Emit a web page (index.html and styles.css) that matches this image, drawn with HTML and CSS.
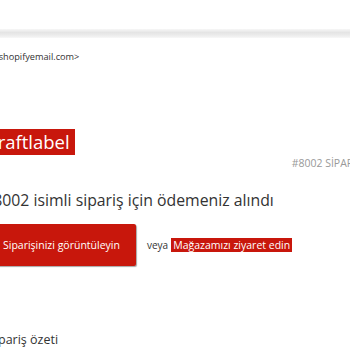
FILE: index.html
```html
<!DOCTYPE html>
<html lang="tr">
<head>
    <meta charset="UTF-8">
    <title>Sipariş onayı</title>
    <link rel="stylesheet" href="styles.css">
</head>
<body>
    <div class="toolbar"></div>
    <div class="divider"></div>

    <div class="sender">&lt;mailer@shopifyemail.com&gt;</div>

    <div class="mail">
        <div class="header">
            <div class="shop-name">Craftlabel</div>
            <div class="order-number">#8002 SİPARİŞ</div>
        </div>

        <h2 class="title">#8002 isimli sipariş için ödemeniz alındı</h2>

        <div class="actions">
            <a class="button" href="#">Siparişinizi görüntüleyin</a>
            <span class="or">veya</span>
            <a class="link" href="#">Mağazamızı ziyaret edin</a>
        </div>

        <h3 class="summary">Sipariş özeti</h3>
    </div>
</body>
</html>
```

FILE: styles.css
```css
body {
    margin: 0;
    font-family: "Open Sans", "Noto Sans", sans-serif;
    color: #333;
    background: #fff;
    overflow: hidden;
}

.toolbar {
    height: 29px;
    background: #fff;
}

.divider {
    height: 9px;
    background: linear-gradient(#f7f7f7, #e4e4e4 40%, #efefef 80%, #f8f8f8);
}

.sender {
    margin: 12px 0 0 -42px;
    font-size: 9.2px;
    color: #333;
}

.mail {
    margin-left: -12px;
    width: 400px;
}

.header {
    display: flex;
    justify-content: space-between;
    align-items: flex-end;
    margin-top: 66px;
}

.shop-name {
    background: #c8170c;
    color: #fff;
    font-size: 18.5px;
    line-height: 26px;
    padding: 0 5px 0 0;
    margin-left: -2px;
}

.order-number {
    font-size: 10.5px;
    color: #999;
    margin-bottom: -15px;
    margin-right: 26px;
}

.title {
    font-size: 15.8px;
    font-weight: normal;
    margin: 34px 0 0 -5px;
}

.actions {
    display: flex;
    align-items: center;
    margin-top: 13px;
}

.button {
    display: block;
    width: 148px;
    line-height: 42px;
    padding-left: 15px;
    box-sizing: border-box;
    background: #c8170c;
    color: #fff;
    font-size: 10.5px;
    text-decoration: none;
    border-radius: 2px;
    box-shadow: 1px 1px 1px rgba(0, 0, 0, 0.35);
}

.or {
    font-size: 10px;
    margin: 0 3px 0 11px;
}

.link {
    background: #c8170c;
    color: #fff;
    font-size: 10.5px;
    text-decoration: none;
    padding: 0 2px;
}

.summary {
    font-size: 12.5px;
    font-weight: normal;
    margin: 65px 0 0;
}
```
